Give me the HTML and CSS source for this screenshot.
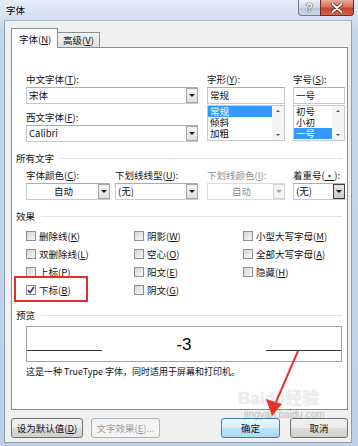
FILE: index.html
```html
<!DOCTYPE html>
<html>
<head>
<meta charset="utf-8">
<title>字体</title>
<link rel="stylesheet" href="styles.css">
</head>
<body>
<div class="window">
  <div class="titlebar">
    <span class="title">字体</span>
    <div class="capbtns">
      <span class="cap help">?</span>
      <span class="cap close">
        <svg width="12" height="10" viewBox="0 0 12 10"><path d="M1.5 1 L10.5 9 M10.5 1 L1.5 9" stroke="#5a1d15" stroke-width="3.4" stroke-linecap="round"/><path d="M1.5 1 L10.5 9 M10.5 1 L1.5 9" stroke="#fff" stroke-width="2" stroke-linecap="round"/></svg>
      </span>
    </div>
  </div>

  <div class="client">
    <div class="tabs">
      <span class="tab on">字体(<u>N</u>)</span>
      <span class="tab">高级(<u>V</u>)</span>
    </div>

    <div class="panel">
      <div class="fonts">
        <div class="col c-font">
          <label>中文字体(<u>T</u>):</label>
          <div class="combo"><span class="val">宋体</span><span class="drop"></span></div>
          <label class="next">西文字体(<u>F</u>):</label>
          <div class="combo"><span class="val">Calibri</span><span class="drop"></span></div>
        </div>
        <div class="col c-style">
          <label>字形(<u>Y</u>):</label>
          <div class="field">常规</div>
          <div class="list">
            <ul><li class="sel">常规</li><li>倾斜</li><li>加粗</li></ul>
            <div class="vscroll"><span class="up"></span><span class="down"></span></div>
          </div>
        </div>
        <div class="col c-size">
          <label>字号(<u>S</u>):</label>
          <div class="field">一号</div>
          <div class="list">
            <ul><li>初号</li><li>小初</li><li class="sel">一号</li></ul>
            <div class="vscroll"><span class="up"></span><span class="down"></span></div>
          </div>
        </div>
      </div>

      <div class="group">所有文字</div>
      <div class="row2">
        <div class="col w-color">
          <label>字体颜色(<u>C</u>):</label>
          <div class="combo center"><span class="val">自动</span><span class="drop"></span></div>
        </div>
        <div class="col w-uline">
          <label>下划线线型(<u>U</u>):</label>
          <div class="combo"><span class="val">(无)</span><span class="drop"></span></div>
        </div>
        <div class="col w-ucolor">
          <label class="off">下划线颜色(<u>I</u>):</label>
          <div class="combo center disabled"><span class="val">自动</span><span class="drop"></span></div>
        </div>
        <div class="col w-emph">
          <label>着重号(<u>·</u>):</label>
          <div class="combo"><span class="val">(无)</span><span class="drop dark"></span></div>
        </div>
      </div>

      <div class="group">效果</div>
      <div class="effects">
        <div class="chk"><span class="box"></span>删除线(<u>K</u>)</div>
        <div class="chk"><span class="box"></span>双删除线(<u>L</u>)</div>
        <div class="chk"><span class="box"></span>上标(<u>P</u>)</div>
        <div class="chk"><span class="box checked"><svg width="8" height="8" viewBox="0 0 8 8"><path d="M1 4.2 L3 6.5 L7 1" fill="none" stroke="#21367a" stroke-width="1.5"/></svg></span>下标(<u>B</u>)</div>
        <div class="chk"><span class="box"></span>阴影(<u>W</u>)</div>
        <div class="chk"><span class="box"></span>空心(<u>O</u>)</div>
        <div class="chk"><span class="box"></span>阳文(<u>E</u>)</div>
        <div class="chk"><span class="box"></span>阴文(<u>G</u>)</div>
        <div class="chk"><span class="box"></span>小型大写字母(<u>M</u>)</div>
        <div class="chk"><span class="box"></span>全部大写字母(<u>A</u>)</div>
        <div class="chk"><span class="box"></span>隐藏(<u>H</u>)</div>
        <div class="mark"></div>
      </div>

      <div class="group">预览</div>
      <div class="preview">
        <span class="rule"></span>
        <span class="sample">-3</span>
        <span class="rule"></span>
      </div>
      <p class="note">这是一种 TrueType 字体，同时适用于屏幕和打印机。</p>
    </div>

    <div class="footer">
      <span class="btn">设为默认值(<u>D</u>)</span>
      <span class="btn disabled">文字效果(<u>E</u>)...</span>
      <span class="btn ok">确定</span>
      <span class="btn cancel">取消</span>
    </div>
  </div>

  <div class="watermark">Baidu经验<small>jingyan.baidu.com</small></div>
  <svg class="arrow" width="358" height="446" viewBox="0 0 358 446">
    <path d="M298 351 L276 402" stroke="#e8332b" stroke-width="2" fill="none"/>
    <polygon points="272,416 266,399 282,404" fill="#e8332b"/>
  </svg>
</div>
</body>
</html>
```

FILE: styles.css
```css
body {
  margin: 0;
  font-family: "Noto Sans CJK SC", "Microsoft YaHei", sans-serif;
  font-size: 9.5px;
  color: #111;
}

u { text-decoration: underline; text-underline-offset: 1px; }

.window {
  position: relative;
  width: 358px;
  height: 446px;
  overflow: hidden;
  background: linear-gradient(#e4ecf6, #c6d6ea 30px, #bfd1e7);
}

/* title bar */
.titlebar { height: 20px; display: flex; align-items: flex-start; }
.title { margin: 3px 0 0 6px; line-height: 14px; color: #000; }
.capbtns { margin-left: auto; margin-right: 4px; display: flex; }
.cap {
  box-sizing: border-box;
  height: 16px;
  display: flex;
  align-items: center;
  justify-content: center;
  border: 1px solid #6c7b8e;
  border-top: none;
}
.help {
  width: 22px;
  border-right: none;
  border-radius: 0 0 0 4px;
  background: linear-gradient(#eef3f9, #cfdbe9 50%, #b7c8dc 51%, #c9d7e6);
  color: #fff;
  font: bold 12px "Liberation Sans", sans-serif;
  text-shadow: 0 0 1px #222, 0 0 1px #222;
}
.close {
  width: 34px;
  border-color: #6b2a21;
  border-radius: 0 0 4px 0;
  background: linear-gradient(#eaa99b, #d7705e 45%, #c4432f 55%, #d2664d);
}

/* dialog body */
.client {
  box-sizing: border-box;
  width: 348px;
  height: 423px;
  margin-left: 4px;
  background: #f0f0f0;
  border: 1px solid #8d9db2;
  border-top-color: #a9b8ca;
  padding: 7px 3px 0 6px;
}

.tabs {
  display: flex;
  align-items: flex-end;
  height: 19px;
  position: relative;
  z-index: 1;
}
.tab {
  box-sizing: border-box;
  height: 15px;
  width: 42px;
  padding-left: 5px;
  line-height: 14px;
  border: 1px solid #898c95;
  border-left: none;
  border-bottom: none;
  background: linear-gradient(#f3f3f3, #e3e3e3);
}
.tab.on {
  width: 47px;
  height: 20px;
  margin-bottom: -1px;
  padding: 3px 0 0 7px;
  border-left: 1px solid #898c95;
  background: #fff;
}

.panel {
  box-sizing: border-box;
  width: 337px;
  height: 363px;
  background: #fff;
  border: 1px solid #898c95;
  padding: 24px 0 0 4px;
}

label { display: block; line-height: 14px; }
label.next { margin-top: 6px; }
label.off { color: #8d8d8d; }

.fonts, .row2 { display: flex; margin-left: 10px; }
.c-font { width: 172px; margin-right: 9px; }
.c-style { width: 78px; margin-right: 8px; }
.c-size { width: 52px; }

.combo, .field {
  box-sizing: border-box;
  height: 17px;
  margin-top: 1px;
  border: 1px solid #c5c9d0;
  border-top-color: #abadb3;
  display: flex;
  align-items: center;
  line-height: 15px;
  background: #fff;
}
.combo .val, .field { padding-left: 2px; }
.combo .val { flex: 1; }
.combo.center .val { text-align: center; }
.combo.disabled { color: #8d8d8d; border-color: #d9dce1; }

.drop {
  box-sizing: border-box;
  width: 12px;
  height: 15px;
  border: 1px solid #a6a6a6;
  background: linear-gradient(#f6f6f6, #dedede);
  position: relative;
  margin-right: -1px;
}
.drop::after {
  content: "";
  position: absolute;
  left: 2px;
  top: 5px;
  border: 3px solid transparent;
  border-top: 3px solid #111;
}
.combo.disabled .drop { border-color: #d3d3d3; background: #f4f4f4; }
.combo.disabled .drop::after { border-top-color: #a5a5a5; }
.drop.dark { border-color: #3e3e3e; background: linear-gradient(#e6e6e6, #c9c9c9); }

.list {
  box-sizing: border-box;
  height: 36px;
  margin-top: 1px;
  border: 1px solid #c5c9d0;
  display: flex;
}
.list ul { flex: 1; margin: 0; padding: 0; list-style: none; }
.list li { height: 11px; line-height: 11px; padding-left: 2px; }
.list li.sel { background: #3399ff; color: #fff; }
.vscroll {
  width: 12px;
  background: #f4f4f4;
  display: flex;
  flex-direction: column;
  justify-content: space-between;
  align-items: center;
  padding: 4px 0;
}
.vscroll span { width: 0; height: 0; border: 2px solid transparent; }
.vscroll .up { border-bottom: 2px solid #555; border-top-width: 0; }
.vscroll .down { border-top: 2px solid #555; border-bottom-width: 0; }

.group {
  display: flex;
  align-items: center;
  line-height: 14px;
  margin-top: 9px;
}
.group::after {
  content: "";
  flex: 1;
  height: 1px;
  background: #dde4ea;
  margin: 0 5px 0 6px;
}

.row2 { margin-top: 3px; }
.w-color { width: 84px; margin-right: 5px; }
.w-uline { width: 83px; margin-right: 9px; }
.w-ucolor { width: 78px; margin-right: 8px; }
.w-emph { width: 52px; }

.effects {
  position: relative;
  display: grid;
  grid-template-columns: 108px 109px auto;
  grid-template-rows: repeat(4, 18px);
  grid-auto-flow: column;
  margin: 4px 0 0 10px;
}
.chk { display: flex; align-items: center; }
.box {
  box-sizing: border-box;
  width: 10px;
  height: 10px;
  margin-right: 3px;
  border: 1px solid #8e8f8f;
  background: linear-gradient(135deg, #d6d6d6, #f6f6f6);
  display: flex;
  align-items: center;
  justify-content: center;
}
.box.checked { background: #f4f4f4; }
.mark {
  position: absolute;
  left: -12px;
  top: 49px;
  width: 74px;
  height: 26px;
  box-sizing: border-box;
  border: 2px solid #e02d2d;
}

.preview {
  box-sizing: border-box;
  height: 36px;
  margin: 4px 5px 0 10px;
  border: 1px solid #a3a3a3;
  display: flex;
  justify-content: space-between;
  align-items: flex-start;
}
.rule { width: 75px; height: 1px; margin-top: 23px; background: #333; }
.sample {
  margin-top: 8px;
  font: 17px/20px "Liberation Sans", sans-serif;
  color: #000;
}

.note { margin: 3px 0 0 10px; line-height: 14px; font-size: 9px; }

.footer { display: flex; margin-top: 8px; }
.btn {
  box-sizing: border-box;
  height: 20px;
  line-height: 18px;
  text-align: center;
  border: 1px solid #707070;
  border-radius: 3px;
  background: linear-gradient(#f2f2f2, #ebebeb 50%, #dddddd 51%, #cfcfcf);
  width: 72px;
}
.btn.disabled {
  width: 69px;
  margin-left: 8px;
  color: #9a9a9a;
  border-color: #adb2b5;
  background: #f4f4f4;
}
.btn.ok {
  width: 59px;
  margin-left: auto;
  border-color: #3c7fb1;
  background: linear-gradient(#eaf6fd, #d9f0fc 50%, #bee6fd 51%, #a7d9f5);
}
.btn.cancel { width: 58px; margin-left: 10px; }

/* annotation overlays */
.watermark {
  position: absolute;
  left: 238px;
  top: 389px;
  font: bold 17px "Liberation Sans", "Noto Sans CJK SC", sans-serif;
  color: rgba(255, 255, 255, 0.5);
  text-shadow: 0 0 1px rgba(120, 120, 120, 0.3);
  line-height: 20px;
}
.watermark small {
  display: block;
  font-size: 10px;
  font-weight: normal;
  line-height: 12px;
  margin-left: 6px;
  color: rgba(150, 150, 150, 0.3);
}
.arrow { position: absolute; left: 0; top: 0; pointer-events: none; }
```
